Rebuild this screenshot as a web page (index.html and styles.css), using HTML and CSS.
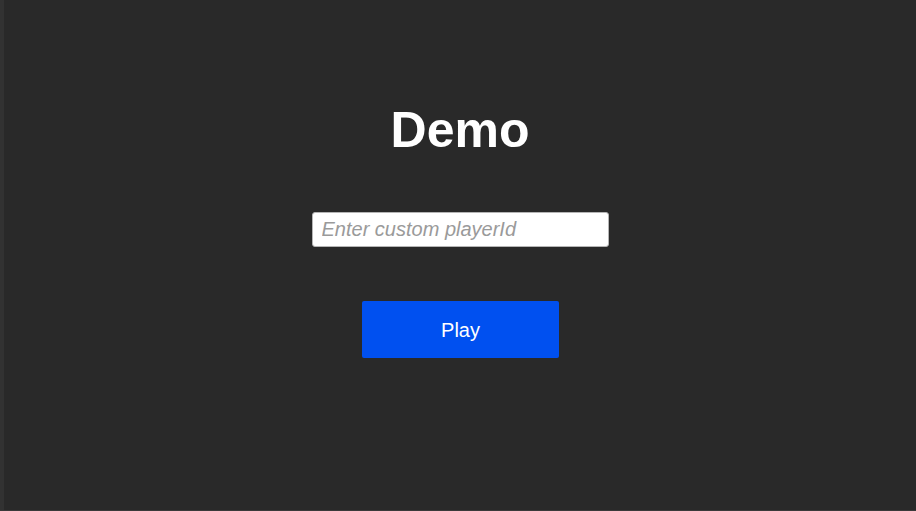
FILE: index.html
```html
<!DOCTYPE html>
<html>
<head>
<meta charset="utf-8">
<link rel="stylesheet" href="styles.css">
</head>
<body>
<div class="frame">
  <div class="side"></div>
  <main class="stage">
    <h1 class="title">Demo</h1>
    <input class="player-input" type="text" placeholder="Enter custom playerId">
    <button class="play-btn">Play</button>
  </main>
</div>
</body>
</html>
```

FILE: styles.css
```css
html, body {
  margin: 0;
  padding: 0;
  width: 916px;
  height: 511px;
  overflow: hidden;
  background: #292929;
  font-family: "Liberation Sans", Arial, sans-serif;
}
.frame {
  display: flex;
  height: 510px;
  border-bottom: 1px solid #3a3a3a;
}
.side {
  width: 4px;
  background: #323232;
}
.stage {
  flex: 1;
  display: flex;
  flex-direction: column;
  align-items: center;
  padding-top: 100px;
}
.title {
  margin: 0;
  font-size: 50px;
  font-weight: bold;
  color: #ffffff;
  line-height: 60px;
}
.player-input {
  margin-top: 52px;
  width: 297px;
  height: 35px;
  box-sizing: border-box;
  border: 1px solid #b5b5b5;
  border-radius: 3px;
  background: #ffffff;
  padding: 0 8px 0 9px;
  font-family: "Liberation Sans", Arial, sans-serif;
  font-size: 20px;
  color: #333;
  outline: none;
}
.player-input::placeholder {
  color: #9a9a9a;
  font-style: italic;
}
.play-btn {
  margin-top: 54px;
  width: 197px;
  height: 57px;
  border: none;
  border-radius: 2px;
  background: #0050f0;
  color: #ffffff;
  font-family: "Liberation Sans", Arial, sans-serif;
  font-size: 20px;
  padding: 2px 0 0 1px;
}
```
